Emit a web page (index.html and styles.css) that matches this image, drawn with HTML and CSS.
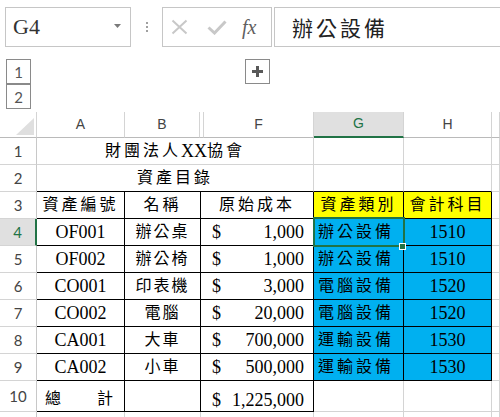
FILE: index.html
```html
<!DOCTYPE html>
<html lang="zh-Hant">
<head>
    <meta charset="UTF-8">
    <meta name="viewport" content="width=device-width, initial-scale=1.0">
    <title>資產目錄</title>
    <link rel="stylesheet" href="styles.css">
</head>
<body>

    <div class="formula-bar">
        <div class="name-box">
            <span class="name">G4</span>
            <svg class="caret" width="7" height="4" viewBox="0 0 7 4"><path d="M0 0h7L3.5 4z" fill="#7a7a7a"/></svg>
        </div>
        <div class="grip"><i></i><i></i><i></i></div>
        <div class="fx-tools">
            <svg class="cancel" width="17" height="16" viewBox="0 0 17 16"><path d="M1.5 1.5l14 13M15.5 1.5l-14 13" stroke="#c8c8c8" stroke-width="2" fill="none"/></svg>
            <svg class="enter" width="20" height="15" viewBox="0 0 20 15"><path d="M1.5 7.5l6 5.5L18.5 1.5" stroke="#c8c8c8" stroke-width="3" fill="none"/></svg>
            <span class="fx">fx</span>
        </div>
        <div class="formula">辦公設備</div>
    </div>

    <div class="outline">
        <div class="levels">
            <span class="level">1</span>
            <span class="level">2</span>
        </div>
        <span class="expand">
            <svg width="11" height="11" viewBox="0 0 11 11"><path d="M4 0h3v4h4v3H7v4H4V7H0V4h4z" fill="#595959"/></svg>
        </span>
    </div>

    <div class="sheet">
        <div class="hrow">
            <div class="hc corner"><svg width="18" height="17" viewBox="0 0 18 17"><path d="M18 0v17H0z" fill="#dfdfdf"/></svg></div>
            <div class="hc">A</div>
            <div class="hc">B</div>
            <div class="hc"></div>
            <div class="hc">F</div>
            <div class="hc active">G</div>
            <div class="hc">H</div>
            <div class="hc"></div>
        </div>

        <div class="row">
            <div class="rh">1</div>
            <div class="c merged zh wide">財團法人<span class="lat">XX</span>協會</div>
            <div class="c"></div>
            <div class="c"></div>
            <div class="c"></div>
        </div>
        <div class="row">
            <div class="rh">2</div>
            <div class="c merged zh wide kb">資產目錄</div>
            <div class="c kb"></div>
            <div class="c kb"></div>
            <div class="c"></div>
        </div>
        <div class="row">
            <div class="rh">3</div>
            <div class="c k zh wide">資產編號</div>
            <div class="c k zh wide">名稱</div>
            <div class="c k zh wide">原始成本</div>
            <div class="c k zh wide yellow">資產類別</div>
            <div class="c k zh wide yellow">會計科目</div>
            <div class="c"></div>
        </div>
        <div class="row">
            <div class="rh active">4</div>
            <div class="c k">OF001</div>
            <div class="c k zh">辦公桌</div>
            <div class="c k money"><span>$</span><span>1,000</span></div>
            <div class="c k zh blue kind sel">辦公設備</div>
            <div class="c k blue">1510</div>
            <div class="c"></div>
        </div>
        <div class="row">
            <div class="rh">5</div>
            <div class="c k">OF002</div>
            <div class="c k zh">辦公椅</div>
            <div class="c k money"><span>$</span><span>1,000</span></div>
            <div class="c k zh blue kind">辦公設備</div>
            <div class="c k blue">1510</div>
            <div class="c"></div>
        </div>
        <div class="row">
            <div class="rh">6</div>
            <div class="c k">CO001</div>
            <div class="c k zh">印表機</div>
            <div class="c k money"><span>$</span><span>3,000</span></div>
            <div class="c k zh blue kind">電腦設備</div>
            <div class="c k blue">1520</div>
            <div class="c"></div>
        </div>
        <div class="row">
            <div class="rh">7</div>
            <div class="c k">CO002</div>
            <div class="c k zh">電腦</div>
            <div class="c k money"><span>$</span><span>20,000</span></div>
            <div class="c k zh blue kind">電腦設備</div>
            <div class="c k blue">1520</div>
            <div class="c"></div>
        </div>
        <div class="row">
            <div class="rh">8</div>
            <div class="c k">CA001</div>
            <div class="c k zh">大車</div>
            <div class="c k money"><span>$</span><span>700,000</span></div>
            <div class="c k zh blue kind">運輸設備</div>
            <div class="c k blue">1530</div>
            <div class="c"></div>
        </div>
        <div class="row">
            <div class="rh">9</div>
            <div class="c k">CA002</div>
            <div class="c k zh">小車</div>
            <div class="c k money"><span>$</span><span>500,000</span></div>
            <div class="c k zh blue kind">運輸設備</div>
            <div class="c k blue">1530</div>
            <div class="c"></div>
        </div>
        <div class="row total">
            <div class="rh">10</div>
            <div class="c k zh spread"><span>總</span><span>計</span></div>
            <div class="c k"></div>
            <div class="c k money"><span>$</span><span>1,225,000</span></div>
            <div class="c"></div>
            <div class="c"></div>
            <div class="c"></div>
        </div>
        <div class="row">
            <div class="rh"></div>
            <div class="c"></div>
            <div class="c"></div>
            <div class="c"></div>
            <div class="c"></div>
            <div class="c"></div>
            <div class="c"></div>
        </div>
    </div>

</body>
</html>
```

FILE: styles.css
```css
body{
    margin: 0;
    width: 500px;
    height: 417px;
    overflow: hidden;
    background: #fff;
    font-family: "Liberation Sans", sans-serif;
}

/* formula bar */
.formula-bar{
    display: flex;
    align-items: flex-start;
    height: 52px;
    padding: 7px 0 0 5px;
    box-sizing: border-box;
}
.name-box{
    display: flex;
    align-items: center;
    justify-content: space-between;
    flex: none;
    width: 126px;
    height: 40px;
    padding: 0 9px 0 7px;
    box-sizing: border-box;
    border: 1px solid #c6c6c6;
}
.name{
    font: 22px "Liberation Serif", serif;
    color: #333;
}
.caret{
    margin-top: -2px;
}
.grip{
    display: flex;
    flex-direction: column;
    align-items: center;
    justify-content: center;
    gap: 2px;
    flex: none;
    width: 31px;
    height: 40px;
}
.grip i{
    width: 2px;
    height: 2px;
    background: #a0a0a0;
}
.fx-tools{
    display: flex;
    align-items: center;
    flex: none;
    width: 110px;
    height: 40px;
    padding-left: 8px;
    box-sizing: border-box;
    border: 1px solid #c6c6c6;
}
.enter{
    margin-left: 19px;
}
.fx{
    margin-left: 15px;
    font: italic 20px "Liberation Serif", serif;
    color: #606060;
}
.formula{
    display: flex;
    align-items: center;
    flex: none;
    width: 260px;
    height: 40px;
    margin-left: 2px;
    padding-left: 17px;
    box-sizing: border-box;
    border: 1px solid #c6c6c6;
    font: 21px "Noto Sans CJK TC", sans-serif;
    letter-spacing: 3px;
    color: #222;
}

/* outline buttons */
.outline{
    display: flex;
    align-items: flex-start;
    height: 60px;
    padding: 7px 0 0 6px;
    box-sizing: border-box;
}
.levels{
    display: flex;
    flex-direction: column;
}
.level, .expand{
    display: flex;
    align-items: center;
    justify-content: center;
    width: 25px;
    height: 25px;
    box-sizing: border-box;
    border: 1px solid #8a8a8a;
    font: 15px Lato, sans-serif;
    color: #555;
}
.expand{
    margin-left: 214px;
}

/* grid */
.hrow, .row{
    display: grid;
}
.hrow{
    grid-template-columns: 37px 88px 75px 4px 110px 90px 88px 1fr;
    height: 26px;
}
.row{
    grid-template-columns: 37px 88px 76px 113px 90px 88px 1fr;
    height: 27px;
}
.row.total{
    height: 31px;
}
.hc, .rh, .c{
    display: flex;
    align-items: center;
    justify-content: center;
    box-sizing: border-box;
    border-right: 1px solid #d4d4d4;
    border-bottom: 1px solid #d4d4d4;
}
.hc{
    border-bottom-color: #bababa;
    font: 14px "Liberation Sans", sans-serif;
    color: #444;
    padding-bottom: 2px;
}
.hc.corner{
    align-items: flex-end;
    justify-content: flex-end;
    padding: 0 2px 2px 0;
}
.rh{
    border-right-color: #c8c8c8;
    font: 15px Lato, sans-serif;
    color: #444;
}
.hc.active, .rh.active{
    background: #e0e0e0;
    color: #217346;
}
.hc.active{
    border-bottom: 2px solid #217346;
}
.rh.active{
    border-right: 2px solid #217346;
}

.c{
    font: 18px/20px "Liberation Serif", "Noto Sans CJK TC", serif;
    color: #000;
    white-space: nowrap;
}
.c.zh{
    font-size: 16px;
    letter-spacing: 2px;
}
.c.zh.wide{
    letter-spacing: 3px;
}
.lat{
    font-size: 18px;
    letter-spacing: 0;
}
.total .c{
    align-items: flex-end;
    padding-bottom: 1px;
}
.merged{
    grid-column: span 3;
}
.k{
    border-color: #000;
}
.kb{
    border-bottom-color: #000;
}
.yellow{
    background: #ffff00;
}
.blue{
    background: #00b0f0;
}
.c.kind{
    justify-content: flex-start;
    padding-left: 4px;
    letter-spacing: 3px;
}
.money{
    justify-content: space-between;
    padding: 0 9px 0 11px;
}
.c.spread{
    justify-content: space-between;
    padding: 0 9px 2px 8px;
}

/* active cell */
.sel{
    position: relative;
}
.sel::after{
    content: '';
    position: absolute;
    top: -2px;
    left: -1px;
    right: -2px;
    bottom: -2px;
    border: 2px solid #217346;
}
.sel::before{
    content: '';
    position: absolute;
    right: -3px;
    bottom: -5px;
    width: 5px;
    height: 5px;
    background: #217346;
    border: 1px solid #fff;
    z-index: 1;
}
```
